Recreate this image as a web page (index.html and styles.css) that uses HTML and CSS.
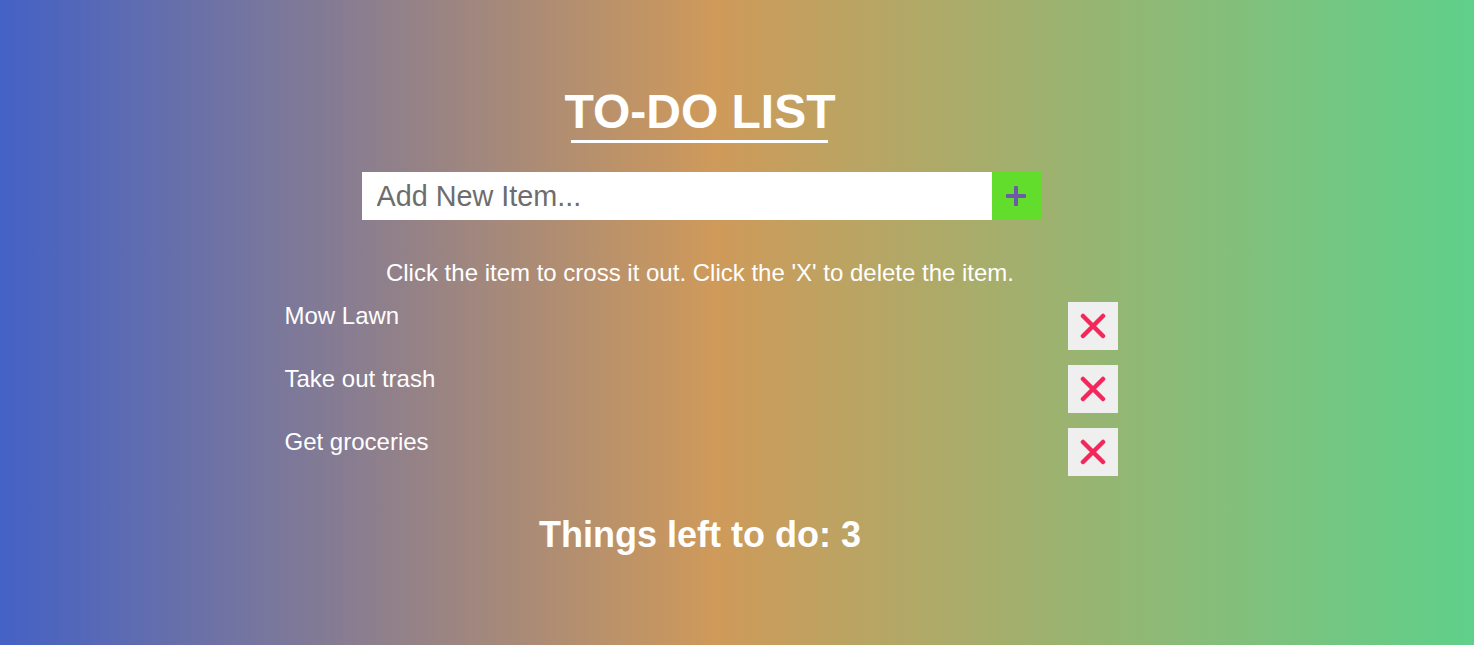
FILE: index.html
```html
<!DOCTYPE html>
<html>
<head>
<meta charset="utf-8">
<link rel="stylesheet" href="styles.css">
</head>
<body>
<div class="page">
  <h1 class="title">TO-DO LIST</h1>
  <form class="add-form">
    <input class="add-input" type="text" placeholder="Add New Item...">
    <button class="add-btn" type="button" aria-label="Add">
      <svg width="20" height="20" viewBox="0 0 20 20"><path d="M10 1.5v17M1.5 10h17" stroke="#6b5aa8" stroke-width="4" stroke-linecap="round"/></svg>
    </button>
  </form>
  <p class="hint">Click the item to cross it out. Click the 'X' to delete the item.</p>
  <ul class="list">
    <li class="item"><span class="item-text">Mow Lawn</span><button class="del" type="button" aria-label="Delete"><svg width="26" height="26" viewBox="0 0 26 26"><path d="M3 3l20 20M23 3L3 23" stroke="#f4275a" stroke-width="4.5" stroke-linecap="round"/></svg></button></li>
    <li class="item"><span class="item-text">Take out trash</span><button class="del" type="button" aria-label="Delete"><svg width="26" height="26" viewBox="0 0 26 26"><path d="M3 3l20 20M23 3L3 23" stroke="#f4275a" stroke-width="4.5" stroke-linecap="round"/></svg></button></li>
    <li class="item"><span class="item-text">Get groceries</span><button class="del" type="button" aria-label="Delete"><svg width="26" height="26" viewBox="0 0 26 26"><path d="M3 3l20 20M23 3L3 23" stroke="#f4275a" stroke-width="4.5" stroke-linecap="round"/></svg></button></li>
  </ul>
  <h2 class="count">Things left to do: 3</h2>
</div>
</body>
</html>
```
FILE: styles.css
```css
html, body {
  margin: 0;
  padding: 0;
  height: 100%;
}
body {
  background: linear-gradient(to right, #4461c5 0%, #cf9a5a 48.5%, #5fd08a 100%);
  font-family: "Liberation Sans", Arial, sans-serif;
  color: #ffffff;
}
.page {
  width: 1400px;
  display: flex;
  flex-direction: column;
  align-items: center;
  padding-top: 84px;
}
.title {
  position: relative;
  margin: 0;
  font-size: 48px;
  font-weight: bold;
  line-height: 56px;
}
.title::after {
  content: "";
  position: absolute;
  left: 7px;
  right: 8px;
  bottom: -3px;
  height: 3px;
  background: #ffffff;
}
.add-form {
  display: flex;
  margin-top: 32px;
  transform: translateX(1px);
}
.add-input {
  width: 630px;
  height: 48px;
  box-sizing: border-box;
  border: none;
  outline: none;
  padding: 0 15px;
  font-family: "Liberation Sans", Arial, sans-serif;
  font-size: 28.8px;
  color: #333;
  background: #fff;
}
.add-input::placeholder {
  color: #6d6d6d;
}
.add-btn {
  width: 49px;
  height: 48px;
  border: none;
  padding: 0;
  background: #62dd2b;
  display: flex;
  align-items: center;
  justify-content: center;
}
.hint {
  margin: 39px 0 0;
  font-size: 24px;
  line-height: 28px;
}
.list {
  list-style: none;
  margin: 15px 0 0;
  padding: 0;
  width: 833px;
  display: flex;
  flex-direction: column;
  gap: 15px;
  transform: translateX(1px);
}
.item {
  display: flex;
  justify-content: space-between;
  align-items: flex-start;
}
.item-text {
  font-size: 24px;
  line-height: 28px;
}
.del {
  width: 50px;
  height: 48px;
  border: none;
  padding: 0;
  background: #efefef;
  display: flex;
  align-items: center;
  justify-content: center;
}
.count {
  margin: 38px 0 0;
  font-size: 36px;
  font-weight: bold;
  line-height: 42px;
}
```
